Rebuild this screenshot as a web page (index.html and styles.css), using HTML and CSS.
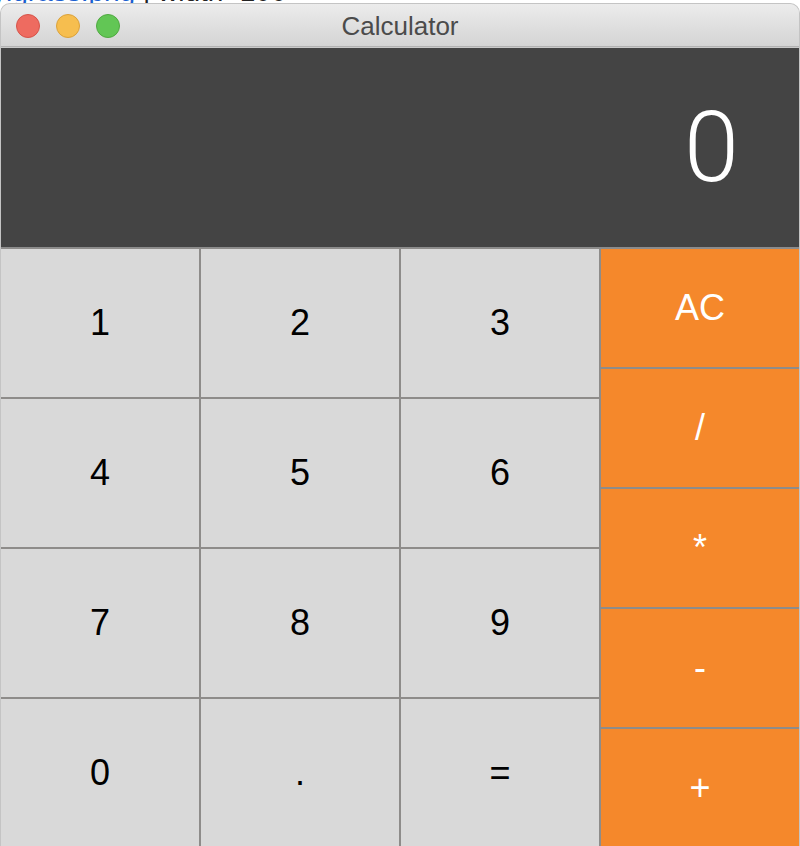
FILE: index.html
```html
<!DOCTYPE html>
<html>
<head>
<meta charset="utf-8">
<title>Calculator</title>
<link rel="stylesheet" href="styles.css">
</head>
<body>
<div class="strip"><div class="strip-text"><span class="link">ylgrass.png</span> | width=100</div></div>
<div class="window">
  <div class="titlebar">
    <div class="lights">
      <span class="light red"></span>
      <span class="light yellow"></span>
      <span class="light green"></span>
    </div>
    <div class="title">Calculator</div>
  </div>
  <div class="display">0</div>
  <div class="keypad">
    <div class="digits">
      <div class="key">1</div><div class="key">2</div><div class="key">3</div>
      <div class="key">4</div><div class="key">5</div><div class="key">6</div>
      <div class="key">7</div><div class="key">8</div><div class="key">9</div>
      <div class="key">0</div><div class="key">.</div><div class="key">=</div>
    </div>
    <div class="ops">
      <div class="key op">AC</div>
      <div class="key op">/</div>
      <div class="key op">*</div>
      <div class="key op">-</div>
      <div class="key op">+</div>
    </div>
  </div>
</div>
</body>
</html>
```
FILE: styles.css
```css
html, body {
  margin: 0;
  padding: 0;
}
body {
  width: 800px;
  height: 846px;
  overflow: hidden;
  background: #ffffff;
  font-family: "Liberation Sans", Arial, sans-serif;
}
.strip {
  height: 3px;
  overflow: hidden;
}
.strip-text {
  margin-top: -22px;
  margin-left: -8px;
  font-size: 28px;
  line-height: 28px;
  color: #222;
  white-space: nowrap;
}
.strip-text .link {
  color: #1a5fd0;
}
.window {
  height: 843px;
  border: 1px solid #c4c4c4;
  border-bottom: none;
  border-radius: 10px 10px 0 0;
  overflow: hidden;
  box-sizing: border-box;
  background: #d9d9d9;
}
.titlebar {
  position: relative;
  height: 42px;
  background: linear-gradient(#ececec, #d4d4d4);
  border-bottom: 1px solid #b2b2b2;
  box-shadow: 0 1px 0 #c9c9c9;
  margin-bottom: 1px;
}
.lights {
  position: absolute;
  left: 15px;
  top: 10px;
  display: flex;
  gap: 16px;
}
.light {
  width: 24px;
  height: 24px;
  border-radius: 50%;
  box-sizing: border-box;
  display: block;
}
.red { background: #ee6b60; border: 1px solid #d6544a; }
.yellow { background: #f6be4f; border: 1px solid #dba23b; }
.green { background: #62c655; border: 1px solid #50a941; }
.title {
  text-align: center;
  font-size: 26px;
  line-height: 42px;
  padding-top: 1px;
  color: #4b4b4b;
}
.display {
  height: 199px;
  background: #444444;
  border-left: 1px solid #5a5a5a;
  border-bottom: 1px solid #8c8c8c;
  box-sizing: content-box;
  margin-left: -1px;
  margin-right: -1px;
  border-right: 1px solid #cfcfcf;
  display: flex;
  align-items: center;
  justify-content: flex-end;
  padding-right: 60px;
  color: #ffffff;
  font-family: Roboto, "Liberation Sans", sans-serif;
  font-weight: 300;
  font-size: 99px;
  line-height: 1;
}
.keypad {
  display: flex;
  margin-left: -1px;
  margin-right: -1px;
}
.digits {
  width: 600px;
  display: grid;
  grid-template-columns: repeat(3, 200px);
  grid-template-rows: repeat(4, 150px);
}
.ops {
  width: 200px;
  display: grid;
  grid-template-rows: repeat(5, 120px);
}
.key {
  box-sizing: border-box;
  border: 1px solid #8e8c8a;
  background: #d9d9d9;
  color: #000000;
  font-size: 36px;
  display: flex;
  align-items: center;
  justify-content: center;
}
.key.op {
  background: #f5882b;
  color: #ffffff;
}
```
